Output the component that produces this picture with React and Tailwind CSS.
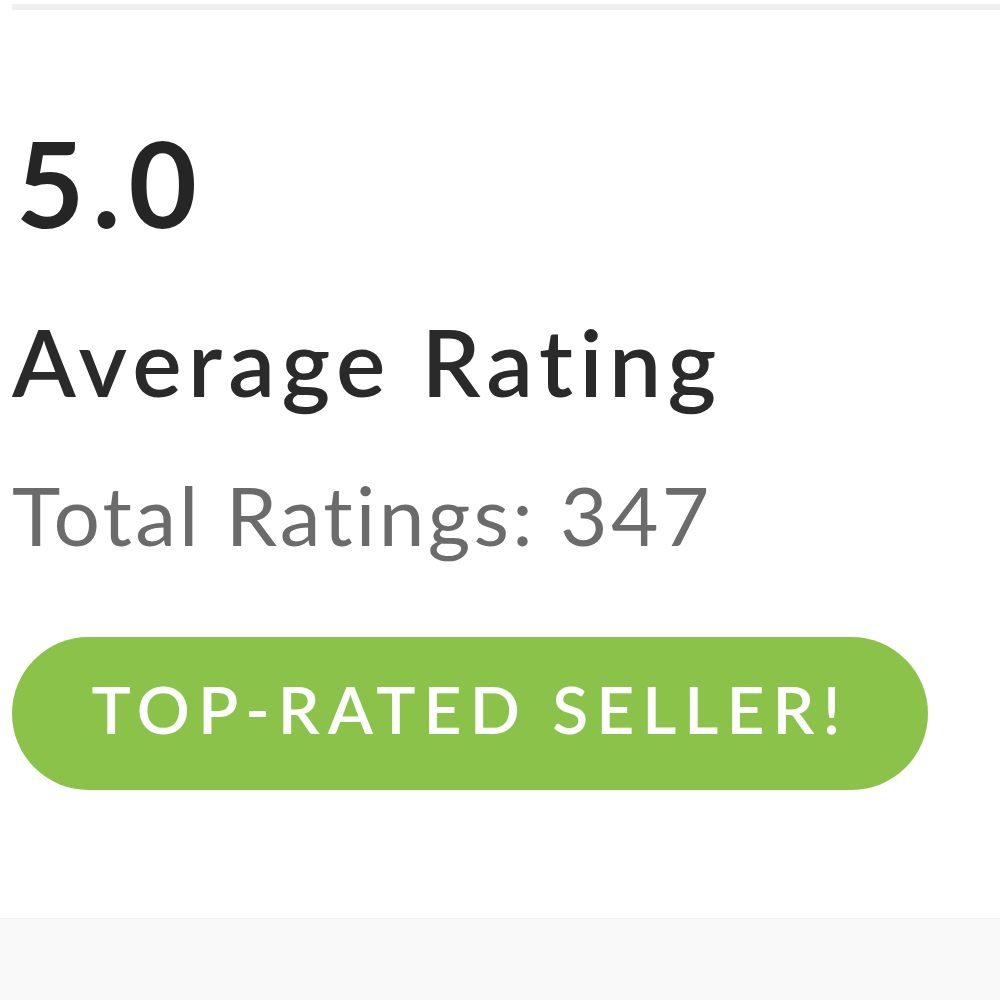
export default function App() {
  return (
    <div className="flex h-[1000px] w-[1000px] flex-col bg-white font-['Lato','Liberation_Sans',sans-serif]">
      <div className="ml-3 mt-1 h-[6px] bg-[#f0f0f0]" />
      <div className="flex flex-1 flex-col items-start px-3">
        <p className="ml-[4px] mt-[114px] text-[118px] font-bold leading-none tracking-[8px] text-[#252525]">5.0</p>
        <p className="mt-[73px] text-[93px] font-semibold leading-none tracking-[6.5px] text-[#2a2a2a]">Average Rating</p>
        <p className="mt-[65px] text-[82px] font-normal leading-none tracking-[3.2px] text-[#6b6b6b]">Total Ratings: 347</p>
        <div className="mt-[82px] flex h-[153px] w-[916px] items-center justify-center rounded-full bg-[#8bc34a] pb-[10px]">
          <span className="text-[66px] font-semibold leading-none tracking-[8px] text-white">TOP-RATED SELLER!</span>
        </div>
      </div>
      <div className="h-[82px] border-t border-[#f0f0f0] bg-[#f9f9f9]" />
    </div>
  );
}
